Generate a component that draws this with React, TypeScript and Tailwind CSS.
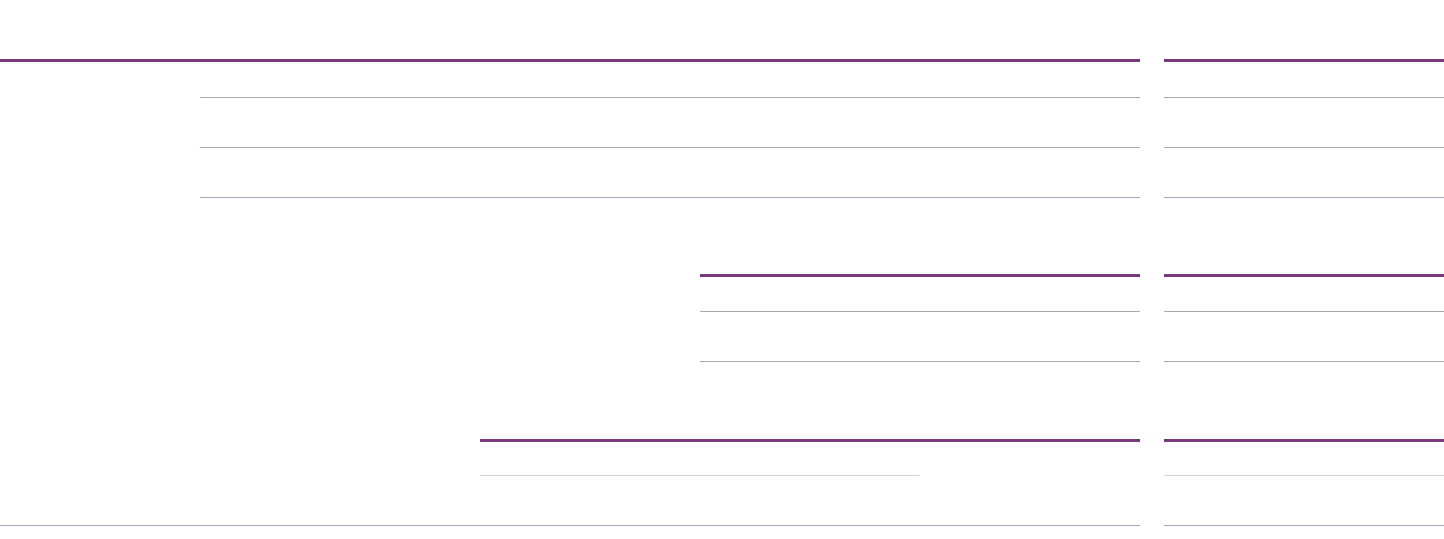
import React from "react";

function Column({ main }: { main: boolean }) {
  return (
    <div className={main ? "w-[1140px] shrink-0" : "w-[280px] shrink-0"}>
      {/* Section 1 */}
      <div className="border-t-[3px] border-[#7b3a7e]">
        <div className={main ? "ml-[200px]" : ""}>
          <div className="h-[36px] border-b border-[#b3a3b9]" />
          <div className="h-[50px] border-b border-[#b3a3b9]" />
          <div className="h-[50px] border-b border-[#b3a3b9]" />
        </div>
      </div>
      {/* Section 2 */}
      <div className={main ? "mt-[76px] ml-[700px]" : "mt-[76px]"}>
        <div className="border-t-[3px] border-[#7b3a7e]">
          <div className="h-[35px] border-b border-[#b3a3b9]" />
          <div className="h-[50px] border-b border-[#b3a3b9]" />
        </div>
      </div>
      {/* Section 3 */}
      <div className={main ? "mt-[77px] ml-[480px]" : "mt-[77px]"}>
        <div className="border-t-[3px] border-[#7b3a7e]">
          <div className={main ? "h-[34px] w-[440px] border-b border-[#dccfe0]" : "h-[34px] border-b border-[#dccfe0]"} />
        </div>
      </div>
      <div className="h-[50px] border-b border-[#b3a3b9]" />
    </div>
  );
}

export default function App() {
  return (
    <div className="w-[1444px] h-[539px] bg-white overflow-hidden font-['Liberation_Sans',sans-serif]">
      <div className="flex gap-[24px] pt-[59px]">
        <Column main />
        <Column main={false} />
      </div>
    </div>
  );
}
